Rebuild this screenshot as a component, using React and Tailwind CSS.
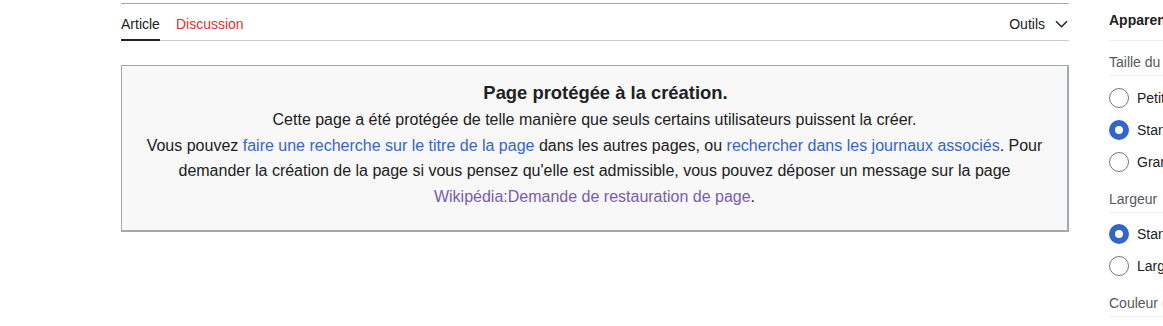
import React from 'react'

function Radio({ checked, label }) {
  return (
    <div className="flex h-[32px] items-center gap-[8px]">
      {checked ? (
        <span className="h-[20px] w-[20px] shrink-0 rounded-full border-[6px] border-[#3366cc] bg-white" />
      ) : (
        <span className="h-[20px] w-[20px] shrink-0 rounded-full border border-[#72777d] bg-white" />
      )}
      <span className="whitespace-nowrap text-[14px] leading-[20px] text-[#202122]">{label}</span>
    </div>
  )
}

function SectionHeading({ children }) {
  return (
    <div className="whitespace-nowrap border-b border-[#eaecf0] pt-[11px] pb-[3px] text-[14px] leading-[20px] text-[#54595d]">
      {children}
    </div>
  )
}

export default function App() {
  return (
    <div className="flex h-[326px] w-[1163px] overflow-hidden bg-white pl-[121px] font-['Liberation_Sans',Arial,sans-serif] text-[#202122]">
      <main className="w-[948px] shrink-0 pt-[3px]">
        <div className="border-t border-[#a2a9b1]">
          <div className="flex h-[37px] items-end justify-between border-b border-[#c8ccd1]">
            <div className="flex gap-[16px] text-[14px]">
              <a className="-mb-px border-b-2 border-[#202122] pb-[5px] leading-[20px] text-[#202122]">Article</a>
              <a className="pb-[6px] leading-[20px] text-[#d73333]">Discussion</a>
            </div>
            <div className="flex items-center gap-[10px] pb-[6px] text-[14px] leading-[20px]">
              <span>Outils</span>
              <svg width="13" height="8" viewBox="0 0 13 8" fill="none" className="mr-px">
                <path d="M1 1.2l5.5 5.5L12 1.2" stroke="#202122" strokeWidth="1.5" />
              </svg>
            </div>
          </div>
        </div>

        <div className="mt-[24px] border border-r-2 border-b-2 border-[#a2a9b1] bg-[#f8f8f8] px-[20px] pt-[13px] pb-[21px] text-center text-[16px] leading-[1.6]">
          <div className="pl-[22px] text-[18.4px] font-bold leading-[28px]">Page protégée à la création.</div>
          <div>Cette page a été protégée de telle manière que seuls certains utilisateurs puissent la créer.</div>
          <div>
            Vous pouvez <a className="text-[#3366cc]">faire une recherche sur le titre de la page</a> dans les autres pages, ou{' '}
            <a className="text-[#3366cc]">rechercher dans les journaux associés</a>. Pour demander la création de la page si
            vous pensez qu'elle est admissible, vous pouvez déposer un message sur la page{' '}
            <a className="text-[#795cb2]">Wikipédia:Demande de restauration de page</a>.
          </div>
        </div>
      </main>

      <aside className="ml-[40px] w-[200px] shrink-0">
        <div className="flex h-[41px] items-center border-b border-[#eaecf0] text-[14px] font-bold leading-[20px]">
          Apparence
        </div>
        <SectionHeading>Taille du texte</SectionHeading>
        <div className="pt-[6px]">
          <Radio label="Petit" />
          <Radio checked label="Standard" />
          <Radio label="Grand" />
        </div>
        <SectionHeading>Largeur</SectionHeading>
        <div className="pt-[5px]">
          <Radio checked label="Standard" />
          <Radio label="Large" />
        </div>
        <SectionHeading>Couleur (bêta)</SectionHeading>
      </aside>
    </div>
  )
}
